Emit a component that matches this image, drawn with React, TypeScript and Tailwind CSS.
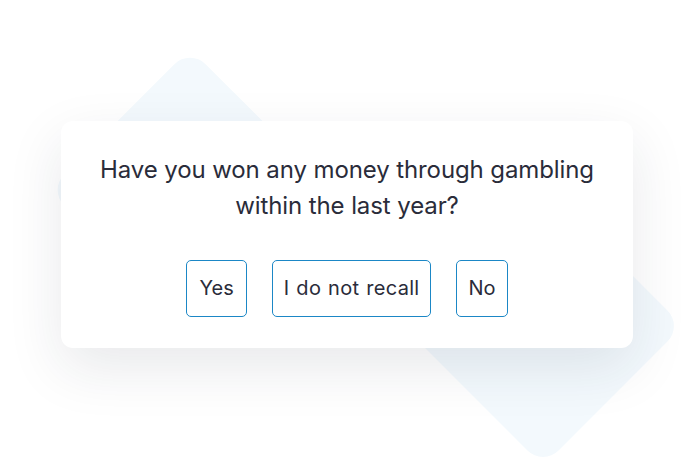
import React from "react";

export default function App() {
  return (
    <div
      className="relative w-[694px] h-[468px] overflow-hidden bg-white flex items-center justify-center"
      style={{ fontFamily: "Inter, 'Noto Sans', sans-serif" }}
    >
      <div className="absolute left-[90px] top-[90px] w-[200px] h-[200px] rotate-45 rounded-[22px] bg-[#f3f9fd]" />
      <div className="absolute left-[444px] top-[227px] w-[198px] h-[198px] rotate-45 rounded-[22px] bg-[#f3f9fd]" />
      <div className="relative w-[572px] h-[227px] bg-white rounded-[12px] shadow-[0_20px_55px_rgba(30,40,60,0.10)] flex flex-col items-center pt-[31px]">
        <p className="text-[24px] leading-[36px] tracking-[-0.1px] text-[#2a2c3a] text-center whitespace-nowrap">
          Have you won any money through gambling
          <br />
          within the last year?
        </p>
        <div className="flex gap-[25px] mt-[36px]">
          <button className="h-[57px] px-[12px] rounded-[5px] border-[1.5px] border-[#1b87c6] text-[20px] text-[#2a2c3a] bg-white">
            Yes
          </button>
          <button className="h-[57px] px-[11px] rounded-[5px] border-[1.5px] border-[#1b87c6] text-[20px] text-[#2a2c3a] bg-white tracking-[0.3px] [word-spacing:1px]">
            I do not recall
          </button>
          <button className="h-[57px] px-[11px] rounded-[5px] border-[1.5px] border-[#1b87c6] text-[20px] text-[#2a2c3a] bg-white">
            No
          </button>
        </div>
      </div>
    </div>
  );
}
